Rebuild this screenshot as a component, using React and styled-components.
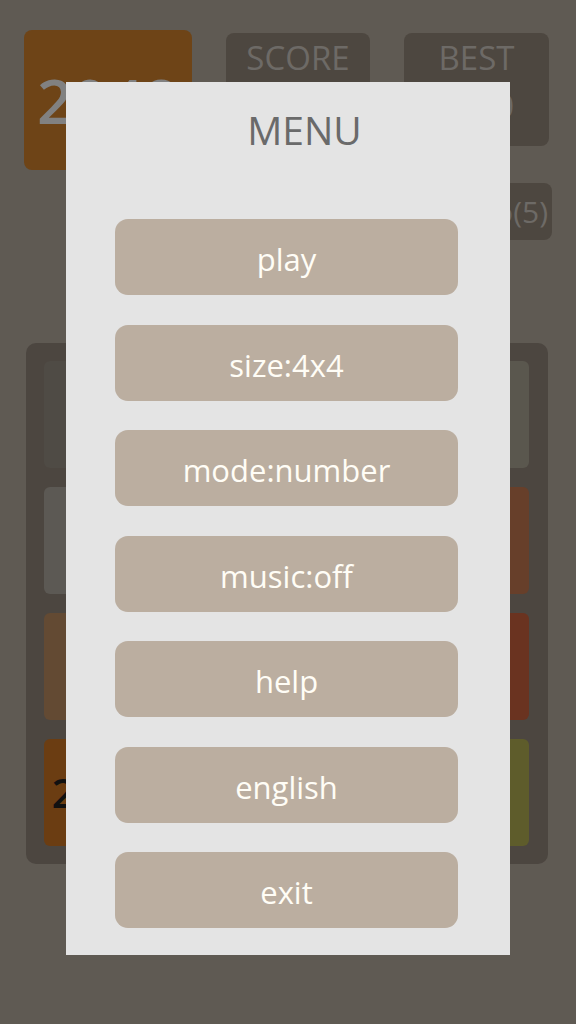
import styled, { createGlobalStyle } from 'styled-components';

const GlobalStyle = createGlobalStyle`
  html, body {
    margin: 0;
    padding: 0;
    background: #5f5a53;
    font-family: 'Open Sans', 'Noto Sans', sans-serif;
  }
  * {
    box-sizing: border-box;
  }
`;

const Page = styled.div`
  width: 576px;
  height: 1024px;
  padding: 30px 27px 0 24px;
  overflow: hidden;
`;

const Header = styled.div`
  display: flex;
  justify-content: space-between;
  align-items: flex-start;
`;

const Logo = styled.div`
  width: 168px;
  height: 140px;
  border-radius: 8px;
  background: #6e4417;
  color: #818181;
  font-size: 62px;
  font-weight: 600;
  display: flex;
  align-items: center;
  justify-content: center;
`;

const ScoreBox = styled.div`
  width: ${props => props.$width}px;
  height: 113px;
  margin-top: 3px;
  border-radius: 8px;
  background: #4d4740;
  color: #6d6a66;
  display: flex;
  flex-direction: column;
  align-items: center;
  padding-top: 2px;
`;

const ScoreLabel = styled.div`
  font-size: 33px;
  line-height: 46px;
`;

const ScoreValue = styled.div`
  font-size: 33px;
  line-height: 50px;
`;

const ActionRow = styled.div`
  display: flex;
  justify-content: space-between;
  align-items: center;
  height: 57px;
  margin-top: 13px;
  margin-right: -3px;
`;

const Hint = styled.div`
  font-size: 28px;
  color: #6d6a66;
  padding-left: 140px;
`;

const UndoButton = styled.div`
  height: 57px;
  padding: 0 4px 0 10px;
  border-radius: 8px;
  background: #4d4740;
  color: #6d6a66;
  font-size: 30px;
  display: flex;
  align-items: center;
`;

const Board = styled.div`
  width: 522px;
  height: 521px;
  margin: 103px 0 0 2px;
  padding: 18px;
  border-radius: 10px;
  background: #4c4640;
  display: grid;
  grid-template-columns: repeat(4, 107px);
  grid-template-rows: repeat(4, 107px);
  gap: 19px;
`;

const Tile = styled.div`
  border-radius: 6px;
  background: ${props => props.$bg};
  color: ${props => props.$fg || '#6d6a66'};
  font-size: 40px;
  font-weight: 600;
  display: flex;
  align-items: center;
  justify-content: center;
`;

const Overlay = styled.div`
  position: fixed;
  inset: 0;
  display: flex;
  justify-content: center;
  align-items: flex-start;
  padding-top: 82px;
`;

const Panel = styled.div`
  width: 444px;
  height: 873px;
  background: #e4e4e4;
  padding: 21px 52px 27px 49px;
  display: flex;
  flex-direction: column;
`;

const Title = styled.div`
  font-size: 39px;
  line-height: 53px;
  color: #6a6a6a;
  text-align: center;
  padding-left: 36px;
  margin-bottom: 63px;
`;

const MenuList = styled.div`
  display: flex;
  flex-direction: column;
  gap: 29.5px;
`;

const MenuButton = styled.div`
  height: 76px;
  border-radius: 13px;
  background: #bbaea0;
  color: #fffdf6;
  font-size: 31px;
  display: flex;
  align-items: center;
  justify-content: center;
  padding-top: 4px;
`;

const tiles = [
  { bg: '#4f4b45', text: '' },
  { bg: '#4f4b45', text: '' },
  { bg: '#5a574e', text: '2' },
  { bg: '#5a574e', text: '4' },
  { bg: '#5c5954', text: '2' },
  { bg: '#5c5954', text: '' },
  { bg: '#634a33', text: '' },
  { bg: '#673f2a', text: '16' },
  { bg: '#634a33', text: '8' },
  { bg: '#5c5954', text: '' },
  { bg: '#4f4b45', text: '' },
  { bg: '#6a3320', text: '32' },
  { bg: '#6b3d12', text: '2048', fg: '#111111' },
  { bg: '#5c5954', text: '' },
  { bg: '#4f4b45', text: '' },
  { bg: '#5e5c2b', text: '128' },
];

const menuItems = ['play', 'size:4x4', 'mode:number', 'music:off', 'help', 'english', 'exit'];

const App = () => {
  return (
    <>
      <GlobalStyle />
      <Page>
        <Header>
          <Logo>2048</Logo>
          <ScoreBox $width={144}>
            <ScoreLabel>SCORE</ScoreLabel>
            <ScoreValue>36</ScoreValue>
          </ScoreBox>
          <ScoreBox $width={145}>
            <ScoreLabel>BEST</ScoreLabel>
            <ScoreValue>2320</ScoreValue>
          </ScoreBox>
        </Header>
        <ActionRow>
          <Hint>Join the numbers</Hint>
          <UndoButton>undo(5)</UndoButton>
        </ActionRow>
        <Board>
          {tiles.map((tile, index) => (
            <Tile key={index} $bg={tile.bg} $fg={tile.fg}>
              {tile.text}
            </Tile>
          ))}
        </Board>
      </Page>
      <Overlay>
        <Panel>
          <Title>MENU</Title>
          <MenuList>
            {menuItems.map(item => (
              <MenuButton key={item}>{item}</MenuButton>
            ))}
          </MenuList>
        </Panel>
      </Overlay>
    </>
  );
};

export default App;
